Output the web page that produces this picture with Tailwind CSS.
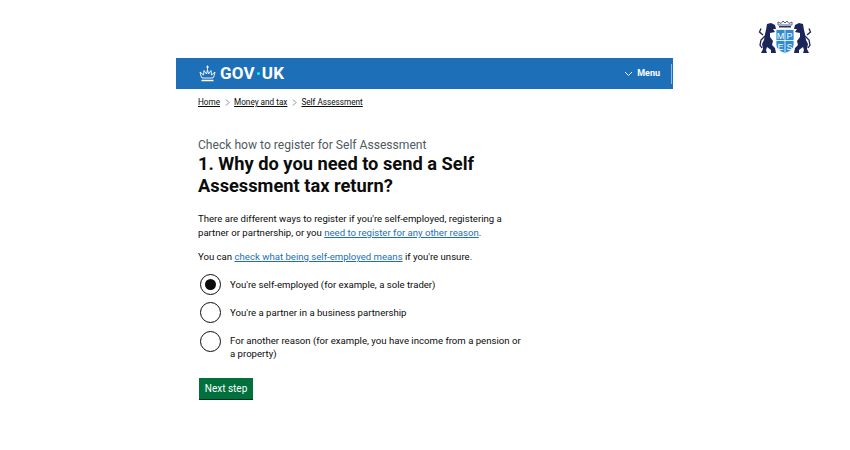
<!DOCTYPE html>
<html lang="en">
<head>
  <meta charset="UTF-8" />
  <title>Check how to register for Self Assessment</title>
  <script src="https://cdn.jsdelivr.net/npm/@tailwindcss/browser@4"></script>
</head>
<body class="bg-white w-[850px] h-[450px] overflow-hidden font-['Roboto',sans-serif] text-[#0b0c0c]">
  <!-- logo row -->
  <div class="h-[58px] flex justify-end items-start pt-[20px] pr-[38px]">
    <svg width="54" height="34" viewBox="0 0 54 34">
      <!-- crown -->
      <path d="M20 5 L20 2 L23 3.500 L25 1 L27 3 L29 1 L31 3.500 L34 2 L34 5 Z" fill="#fff" stroke="#5a6088" stroke-width="1"/>
      <rect x="21" y="6" width="12" height="1.500" fill="#2b3468"/>
      <!-- left lion -->
      <g fill="#1b2559">
        <path d="M9 4 L13 3 L17 5 L18 9 L15 9 L17 12 L12 13 L12 17 L15 21 L14 25 L17 28 L18 33 L13 33 L13 30 L9 27 L8 30 L9 33 L3 33 L5 29 L4 24 L6 20 L7 14 L8 10 Z"/>
        <path d="M7 16 L3 20 L2 25 L4 28" fill="none" stroke="#1b2559" stroke-width="1.300"/>
        <path d="M5 15 L1.500 12 L3 8.500" fill="none" stroke="#1b2559" stroke-width="1.300"/>
      </g>
      <!-- right lion -->
      <g fill="#1b2559" transform="translate(54 0) scale(-1 1)">
        <path d="M9 4 L13 3 L17 5 L18 9 L15 9 L17 12 L12 13 L12 17 L15 21 L14 25 L17 28 L18 33 L13 33 L13 30 L9 27 L8 30 L9 33 L3 33 L5 29 L4 24 L6 20 L7 14 L8 10 Z"/>
        <path d="M7 16 L3 20 L2 25 L4 28" fill="none" stroke="#1b2559" stroke-width="1.300"/>
        <path d="M5 15 L1.500 12 L3 8.500" fill="none" stroke="#1b2559" stroke-width="1.300"/>
      </g>
      <!-- shield -->
      <path d="M18 9.500 H36 V25 Q36 30 27 33.500 Q18 30 18 25 Z" fill="#2f8ad0" stroke="#fff" stroke-width="0.800"/>
      <path d="M27 9.500 V33 M18 20.500 H36" stroke="#fff" stroke-width="0.800"/>
      <text x="22.500" y="18.800" text-anchor="middle" fill="#fff" font-size="9" font-family="Liberation Sans">M</text>
      <text x="31.500" y="18.800" text-anchor="middle" fill="#fff" font-size="9" font-family="Liberation Sans">P</text>
      <text x="22.500" y="29.500" text-anchor="middle" fill="#fff" font-size="9" font-family="Liberation Sans">E</text>
      <text x="31.500" y="29.500" text-anchor="middle" fill="#fff" font-size="9" font-family="Liberation Sans">S</text>
    </svg>
  </div>

  <main class="ml-[176px] w-[497px]">
    <header class="h-[31px] bg-[#1d70b8] flex items-center justify-between pl-[22px] pr-[1px] text-white">
      <div class="flex items-center gap-[3px]">
        <svg width="19" height="17" viewBox="0 0 19 17" fill="none" stroke="#fff" stroke-width="0.900">
          <path d="M9.500 0.500 V4 M8 2 H11"/>
          <path d="M2 7 Q3 12 4 13 H15 Q16 12 17 7 L13.500 10 L13 5.500 L10.500 9 L9.500 4.500 L8.500 9 L6 5.500 L5.500 10 Z"/>
          <path d="M3.500 15.500 H15.500" stroke-width="1.500"/>
        </svg>
        <span class="text-[17px] font-bold flex items-center tracking-[0.2px]">GOV<span class="w-[3px] h-[3px] rounded-full bg-[#00ffe0] mx-[2px]"></span>UK</span>
      </div>
      <div class="flex items-center h-full">
        <svg width="9" height="6" viewBox="0 0 9 6" fill="none" stroke="#fff" stroke-width="1" class="mr-[4px]"><path d="M1 1 L4.500 4.500 L8 1"/></svg>
        <span class="text-[9px] font-bold mr-[11px]">Menu</span>
        <span class="w-[1px] h-[20px] bg-white/50"></span>
      </div>
    </header>

    <nav class="mt-[7px] pl-[22px] flex items-center text-[8.200px] leading-[12px]">
      <a class="underline">Home</a>
      <svg width="5" height="7" viewBox="0 0 5 7" fill="none" stroke="#505a5f" stroke-width="0.700" class="mx-[4.500px]"><path d="M1 0.500 L4 3.500 L1 6.500"/></svg>
      <a class="underline">Money and tax</a>
      <svg width="5" height="7" viewBox="0 0 5 7" fill="none" stroke="#505a5f" stroke-width="0.700" class="mx-[4.500px]"><path d="M1 0.500 L4 3.500 L1 6.500"/></svg>
      <a class="underline">Self Assessment</a>
    </nav>

    <div class="pl-[22px] pt-[29px] w-[360px]">
      <p class="text-[12.100px] leading-[16px] text-[#505a5f]">Check how to register for Self Assessment</p>
      <h1 class="text-[18.250px] leading-[22px] font-bold">1. Why do you need to send a Self Assessment tax return?</h1>
      <p class="text-[9.600px] leading-[14px] mt-[15px] w-[310px]">There are different ways to register if you're self-employed, registering a partner or partnership, or you <a class="text-[#1d70b8] underline">need to register for any other reason</a>.</p>
      <p class="text-[9.600px] leading-[14px] mt-[10px]">You can <a class="text-[#1d70b8] underline">check what being self-employed means</a> if you're unsure.</p>

      <div class="mt-[10px] flex flex-col gap-[7px] pl-[2px]">
        <label class="flex items-center gap-[9px] min-h-[21px] text-[9.600px] leading-[14px]">
          <span class="w-[21px] h-[21px] shrink-0 rounded-full border-[1.500px] border-[#0b0c0c] flex items-center justify-center"><span class="w-[11px] h-[11px] rounded-full bg-[#0b0c0c]"></span></span>
          You're self-employed (for example, a sole trader)
        </label>
        <label class="flex items-center gap-[9px] min-h-[21px] text-[9.600px] leading-[14px]">
          <span class="w-[21px] h-[21px] shrink-0 rounded-full border-[1.500px] border-[#0b0c0c]"></span>
          You're a partner in a business partnership
        </label>
        <label class="flex items-start gap-[9px] text-[9.600px] leading-[13px] mt-[1px]">
          <span class="w-[21px] h-[21px] shrink-0 rounded-full border-[1.500px] border-[#0b0c0c]"></span>
          <span class="w-[295px] pt-[3px]">For another reason (for example, you have income from a pension or a property)</span>
        </label>
      </div>

      <button class="mt-[18px] ml-[1px] h-[21px] w-[54px] bg-[#00703c] text-white text-[10px] shadow-[0_1px_0_#002d18]">Next step</button>
    </div>
  </main>
</body>
</html>
